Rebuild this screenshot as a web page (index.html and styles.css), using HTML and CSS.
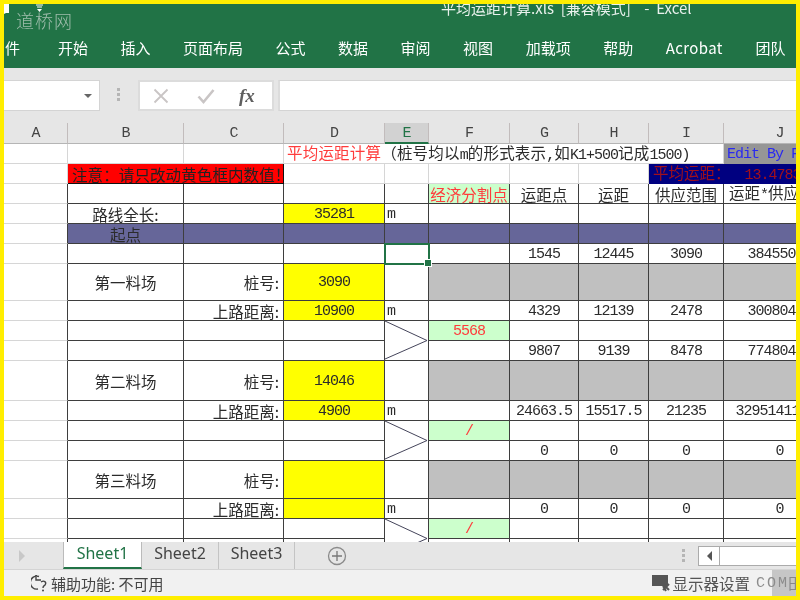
FILE: index.html
```html
<!DOCTYPE html>
<html lang="zh">
<head>
<meta charset="utf-8">
<title>平均运距计算.xls</title>
<link rel="stylesheet" href="styles.css">
</head>
<body>
<div class="app">
  <header class="ribbon">
    <div class="titlebar">
      <svg class="qa" width="40" height="12" viewBox="0 0 40 12"><path d="M0 0h5v9H2L0 10z" fill="#fff"/><path d="M32 1h7M33 3h5" stroke="#fff" fill="none"/><path d="M33 5h5l-2.500 3z" fill="#fff"/></svg>
      <span class="mark">道桥网</span>
      <span class="doc">平均运距计算.xls&nbsp; [兼容模式]&nbsp;&nbsp;&nbsp; -&nbsp; Excel</span>
    </div>
    <nav class="tabs">
      <span class="first">件</span><span>开始</span><span>插入</span><span>页面布局</span><span>公式</span><span>数据</span><span>审阅</span><span>视图</span><span>加载项</span><span>帮助</span><span class="acro">Acrobat</span><span>团队</span>
    </nav>
  </header>

  <div class="fbar">
    <div class="namebox"><i class="caret"></i></div>
    <div class="grip"><i></i><i></i><i></i></div>
    <div class="fbtns">
      <svg width="16" height="16" viewBox="0 0 16 16"><path d="M1.500 1.500l13 13M14.500 1.500l-13 13" stroke="#c9c5c5" stroke-width="1.800" fill="none"/></svg>
      <svg width="18" height="16" viewBox="0 0 18 16"><path d="M1.500 8.500l5 5.500 10-12" stroke="#c9c5c5" stroke-width="2.600" fill="none"/></svg>
      <span class="fx">fx</span>
    </div>
    <div class="finput"></div>
  </div>

  <div class="sheet">
    <table class="grid">
      <colgroup><col class="ca"><col class="cb"><col class="cc"><col class="cd"><col class="ce"><col class="cf"><col class="cg"><col class="ch"><col class="ci"><col class="cj"></colgroup>
      <tr class="hd"><th>A</th><th>B</th><th>C</th><th>D</th><th class="cur">E</th><th>F</th><th>G</th><th>H</th><th>I</th><th>J</th></tr>
      <tr class="lt"><td></td><td></td><td></td><td colspan="6" class="title"><span class="z red">平均运距计算</span><span class="z">（桩号均以</span>m<span class="z">的形式表示</span>,<span class="z">如</span>K1+500<span class="z">记成</span>1500)</td><td class="edit">Edit By F</td></tr>
      <tr class="lt"><td></td><td colspan="2" class="warn z">注意：请只改动黄色框内数值！</td><td></td><td></td><td></td><td></td><td></td><td colspan="2" class="avg"><span class="z">平均运距：</span><span class="avgv">13.47835</span></td></tr>
      <tr><td class="a"></td><td></td><td></td><td></td><td></td><td class="gr z red">经济分割点</td><td class="z">运距点</td><td class="z">运距</td><td class="z">供应范围</td><td><span class="z">运距</span>*<span class="z">供应范围</span></td></tr>
      <tr><td class="a"></td><td class="z">路线全长:</td><td></td><td class="ye">35281</td><td class="l">m</td><td></td><td></td><td></td><td></td><td></td></tr>
      <tr class="pu"><td class="a"></td><td class="z">起点</td><td></td><td></td><td></td><td></td><td></td><td></td><td></td><td></td></tr>
      <tr><td class="a"></td><td></td><td></td><td></td><td class="sel"></td><td></td><td>1545</td><td>12445</td><td>3090</td><td>38455050</td></tr>
      <tr class="r37"><td class="a"></td><td class="z">第一料场</td><td class="z r">桩号:</td><td class="ye">3090</td><td></td><td class="gy"></td><td class="gy"></td><td class="gy"></td><td class="gy"></td><td class="gy"></td></tr>
      <tr><td class="a"></td><td></td><td class="z r">上路距离:</td><td class="ye">10900</td><td class="l">m</td><td></td><td>4329</td><td>12139</td><td>2478</td><td>30080442</td></tr>
      <tr><td class="a"></td><td></td><td></td><td></td><td rowspan="2" class="dg"><svg viewBox="0 0 44 40" preserveAspectRatio="none"><path d="M0 0L43 20L0 39" fill="none" stroke="#3f3f55"/></svg></td><td class="gr red">5568</td><td></td><td></td><td></td><td></td></tr>
      <tr><td class="a"></td><td></td><td></td><td></td><td></td><td>9807</td><td>9139</td><td>8478</td><td>77480442</td></tr>
      <tr class="r40"><td class="a"></td><td class="z">第二料场</td><td class="z r">桩号:</td><td class="ye">14046</td><td></td><td class="gy"></td><td class="gy"></td><td class="gy"></td><td class="gy"></td><td class="gy"></td></tr>
      <tr><td class="a"></td><td></td><td class="z r">上路距离:</td><td class="ye">4900</td><td class="l">m</td><td></td><td>24663.5</td><td>15517.5</td><td>21235</td><td>329514112.5</td></tr>
      <tr><td class="a"></td><td></td><td></td><td></td><td rowspan="2" class="dg"><svg viewBox="0 0 44 40" preserveAspectRatio="none"><path d="M0 0L43 20L0 39" fill="none" stroke="#3f3f55"/></svg></td><td class="gr red">/</td><td></td><td></td><td></td><td></td></tr>
      <tr><td class="a"></td><td></td><td></td><td></td><td></td><td>0</td><td>0</td><td>0</td><td>0</td></tr>
      <tr class="r38"><td class="a"></td><td class="z">第三料场</td><td class="z r">桩号:</td><td class="ye"></td><td></td><td class="gy"></td><td class="gy"></td><td class="gy"></td><td class="gy"></td><td class="gy"></td></tr>
      <tr><td class="a"></td><td></td><td class="z r">上路距离:</td><td class="ye"></td><td class="l">m</td><td></td><td>0</td><td>0</td><td>0</td><td>0</td></tr>
      <tr><td class="a"></td><td></td><td></td><td></td><td rowspan="2" class="dg"><svg viewBox="0 0 44 40" preserveAspectRatio="none"><path d="M0 0L43 20L0 39" fill="none" stroke="#3f3f55"/></svg></td><td class="gr red">/</td><td></td><td></td><td></td><td></td></tr>
      <tr><td class="a"></td><td></td><td></td><td></td><td></td><td></td><td></td><td></td><td></td></tr>
    </table>
  </div>

  <div class="tabbar">
    <div class="tabnav"><i class="tri-r"></i></div>
    <div class="stab on">Sheet1</div>
    <div class="stab">Sheet2</div>
    <div class="stab sep">Sheet3</div>
    <svg class="plus" width="20" height="20" viewBox="0 0 20 20"><circle cx="10" cy="10" r="8.500" fill="none" stroke="#8a8a8a" stroke-width="1.300"/><path d="M10 5v10M5 10h10" stroke="#777" stroke-width="1.300"/></svg>
    <div class="grip g2"><i></i><i></i><i></i></div>
    <div class="hscroll"><div class="hleft"><i class="tri-l"></i></div></div>
  </div>

  <footer class="status">
    <svg class="acc" width="18" height="18" viewBox="0 0 18 18"><path d="M8 2.500A6.500 6.500 0 1 0 7 15M5 1v5h5M10 8c3-2 6 0 4 3-1 1-2 1-2 3" fill="none" stroke="#444" stroke-width="1.400"/><circle cx="12" cy="16.500" r="1" fill="#444"/></svg>
    <span class="acc-t">辅助功能: 不可用</span>
    <div class="sright">
      <svg width="20" height="20" viewBox="0 0 20 20"><path d="M0 2h16v11H0z" fill="#555"/><path d="M11 13l3 5M17 11l-6 6M11 11l6 6" stroke="#555" stroke-width="2"/></svg>
      <span class="disp">显示器设置</span>
      <span class="com">COM</span>
      <span class="blk">田</span>
    </div>
  </footer>
</div>
</body>
</html>
```
FILE: styles.css
```css
* { box-sizing: border-box; }
html, body { margin: 0; height: 100%; }
body { background: #ffee00; padding: 4px; overflow: hidden; }
.app {
  width: 792px; height: 592px; display: flex; flex-direction: column; overflow: hidden;
  background: #e6e6e6; filter: blur(0.35px);
  font-family: "Noto Sans CJK SC", "Noto Sans", sans-serif;
}

/* ribbon */
.ribbon { height: 64px; flex: none; background: #217346; color: #fff; overflow: hidden; }
.titlebar { height: 30px; display: flex; align-items: flex-start; position: relative; overflow: hidden; }
.qa { flex: none; }
.mark { font-size: 18px; line-height: 24px; color: #9fbdac; margin: 4px 0 0 -28px; letter-spacing: 1px; width: 425px; flex: none; font-family: "Noto Sans CJK SC", serif; font-weight: 300; }
.doc { font-size: 15px; line-height: 16px; margin-top: -4px; white-space: nowrap; color: #e9f1ec; }
.tabs { display: flex; gap: 32.500px; font-size: 15px; line-height: 24px; margin-top: 2px; white-space: nowrap; }
.tabs .first { margin-left: 1px; margin-right: 5.500px; }
.tabs .acro { letter-spacing: 0.400px; }

/* formula bar */
.fbar { height: 55px; flex: none; display: flex; align-items: flex-start; padding-top: 12px; }
.namebox { width: 96px; height: 31px; background: #fff; border: 1px solid #d4d4d4; border-left: 0; position: relative; flex: none; display: flex; align-items: center; justify-content: flex-end; padding-right: 7px; }
.caret { width: 0; height: 0; border: 4px solid transparent; border-top-color: #666; border-bottom: 0; }
.grip { width: 3px; display: flex; flex-direction: column; gap: 2px; margin: 8px 0 0 17px; flex: none; }
.grip i { width: 3px; height: 3px; background: #b5b5b5; }
.fbtns { width: 136px; height: 31px; margin-left: 18px; background: #fff; border: 2px solid #dcdcdc; flex: none; display: flex; align-items: center; padding-left: 13px; }
.fbtns svg:nth-child(2) { margin-left: 28px; }
.fx { margin-left: 24px; font: italic 700 19px "Liberation Serif", serif; color: #5f5f5f; }
.finput { flex: 1; height: 31px; margin-left: 4px; background: #fff; border-top: 1px solid #d4d4d4; border-bottom: 1px solid #d4d4d4; border-left: 2px solid #dcdcdc; }

/* sheet */
.sheet { height: 419px; flex: none; overflow: hidden; background: #fff; }
.grid { border-collapse: separate; border-spacing: 0; table-layout: fixed; width: 832px; font: 15px "Liberation Mono", "Noto Sans CJK SC", monospace; letter-spacing: -1px; color: #2b2b2b; }
.ca { width: 64px; } .cb { width: 116px; } .cc { width: 100px; } .cd { width: 101px; } .ce { width: 44px; }
.cf { width: 81px; } .cg { width: 69px; } .ch { width: 70px; } .ci { width: 75px; } .cj { width: 112px; }
tr { height: 20px; }
tr.hd { height: 21px; }
.r37 { height: 37px; } .r40 { height: 40px; } .r38 { height: 38px; }
td, th { padding: 1px 0 0; text-align: center; white-space: nowrap; font-weight: 400; border-right: 1px solid #3e3e3e; border-bottom: 1px solid #3e3e3e; position: relative; line-height: 15px; }
th { background: #e6e6e6; color: #444; border-right: 1px solid #c2bcbc; border-bottom: 1px solid #b5b5b5; }
th.cur { background: #d2d2d2; border-bottom: 2px solid #217346; color: #217346; }
td.a { border-bottom-color: #d6d6d6; }
.lt td { border-color: #d6d6d6; }
.z, .warn { font-size: 15.500px; letter-spacing: 0; font-family: "Noto Sans CJK SC", sans-serif; font-weight: 400; line-height: 15px; }
.red { color: #ff3b3b; }
.r { text-align: right; padding-right: 4px; }
.l { text-align: left; padding-left: 2px; }
.ye { background: #ffff00; }
.gy { background: #c0c0c0; }
.gr { background: #ccffcc; }
.pu td:not(.a) { background: #666699; }
.lt td.title { text-align: left; padding-left: 3px; border-color: #fff #d6d6d6 #d6d6d6 #fff; }
.title .z { letter-spacing: 0.200px; }
.lt td.edit { background: #969696; color: #2a2af0; text-align: left; padding-left: 3px; overflow: hidden; border-color: #969696; }
.lt td.warn { background: #ff0000; color: #222; text-align: left; padding-left: 4px; letter-spacing: 0.100px; overflow: hidden; border-color: #111; }
.lt td.avg { background: #000080; color: #a0101c; text-align: left; padding-left: 4px; overflow: hidden; border-color: #000080; }
.avgv { margin-left: 14px; }
.sel { outline: 2px solid #217346; outline-offset: -1px; z-index: 1; }
.sel::after { content: ""; position: absolute; right: -4px; bottom: -4px; width: 6px; height: 6px; background: #217346; border: 1px solid #fff; }
.dg svg { position: absolute; inset: 0; width: 100%; height: 100%; }

/* tabs */
.tabbar { height: 28px; flex: none; display: flex; align-items: flex-start; background: #e6e6e6; font-size: 16px; font-family: "Noto Sans", sans-serif; color: #444; border-bottom: 1px solid #d4d4d4; }
.tabnav { width: 59px; height: 27px; flex: none; display: flex; align-items: center; padding-left: 15px; }
.tri-r { width: 0; height: 0; border: 6px solid transparent; border-left-color: #c8c8c8; border-right: 0; }
.stab { height: 27px; padding: 0; line-height: 22px; border-right: 1px solid #c4c4c4; flex: none; width: 77px; text-align: center; }
.stab.on { width: 79px; background: #fff; color: #217346; border-right: 1px solid #bbb; border-left: 1px solid #bbb; border-bottom: 2px solid #217346; }
.stab.sep { width: 76px; }
.plus { margin: 4px 0 0 32px; flex: none; }
.g2 { margin: 7px 0 0 335px; }
.hscroll { width: 98px; height: 20px; margin: 4px 0 0 13px; background: #fff; border: 1px solid #ababab; border-right: 0; flex: none; }
.hleft { width: 21px; height: 18px; border-right: 1px solid #ababab; display: flex; align-items: center; justify-content: center; }
.tri-l { width: 0; height: 0; border: 5px solid transparent; border-right-color: #555; border-left: 0; }

/* status */
.status { height: 26px; flex: none; display: flex; align-items: center; background: #f1f1f1; padding-left: 27px; font-size: 15px; color: #444; }
.acc { flex: none; }
.acc-t { margin-left: 2px; }
.sright { margin-left: auto; height: 26px; display: flex; align-items: center; }
.sright svg { flex: none; }
.disp { font-size: 15.500px; color: #555; margin-right: 6px; }
.com { font: 15px "Liberation Mono", monospace; letter-spacing: 2px; color: #8c8c8c; width: 16px; position: relative; z-index: 1; white-space: nowrap; }
.blk { width: 24px; height: 26px; background: #c6c6c6; color: #888; padding-left: 16px; overflow: hidden; line-height: 26px; }
```
